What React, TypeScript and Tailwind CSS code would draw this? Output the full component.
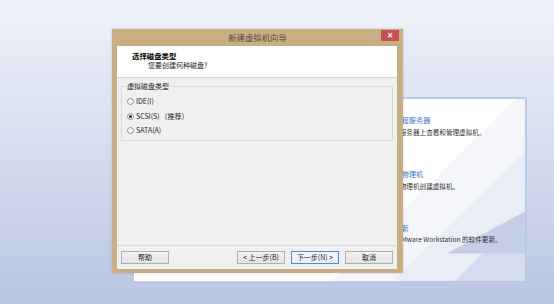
import React from "react";

const F = { fontFamily: '"Noto Sans CJK SC", "Noto Sans", sans-serif' };

function Radio({ checked, label, extra }: { checked?: boolean; label: string; extra?: string }) {
  return (
    <div className="flex items-center h-[14.7px]">
      <span className="w-[7px] h-[7px] rounded-full border border-[#8a8a8a] bg-white flex items-center justify-center shrink-0">
        {checked && <span className="w-[3px] h-[3px] rounded-full bg-[#222]" />}
      </span>
      <span className="ml-[2px] text-[7px] leading-none text-[#222]">{label}</span>
      {extra && <span className="ml-[1px] text-[7px] leading-none text-[#222]">{extra}</span>}
    </div>
  );
}

function Btn({ label, primary }: { label: string; primary?: boolean }) {
  return (
    <div
      className={
        "w-[48px] h-[13px] flex items-center justify-center text-[7px] leading-none text-[#222] border " +
        (primary
          ? "border-[#4a8fd0] bg-gradient-to-b from-[#f4f8fc] to-[#e6eef8]"
          : "border-[#b0b0b0] bg-gradient-to-b from-[#f2f2f2] to-[#e4e4e4]")
      }
    >
      {label}
    </div>
  );
}

export default function App() {
  return (
    <div
      className="relative w-[554px] h-[304px] overflow-hidden bg-gradient-to-b from-[#eff2f8] via-[#d6ddef] to-[#bbc5e2]"
      style={F}
    >
      {/* background window */}
      <div className="absolute left-[132px] top-[97px] w-[395px] h-[186px] bg-white border-2 border-[#b8cbe2] overflow-hidden">
        <svg className="absolute inset-0 w-full h-full" viewBox="0 0 395 186" preserveAspectRatio="none">
          <polygon points="200,186 395,-9 395,186" fill="#f4f6fb" />
          <polygon points="262,186 395,53 395,186" fill="#e9edf6" />
          <polygon points="324,186 395,115 395,186" fill="#d6dcef" />
          <polygon points="316,158 395,115 395,158" fill="#c6cee7" />
        </svg>
        <div className="relative flex flex-col pl-[246px] pt-[17px] gap-[33px]">
          <div className="flex flex-col gap-[3px]">
            <div className="text-[7.2px] leading-[9px] text-[#3c78c0]">连接远程服务器</div>
            <div className="text-[6.6px] leading-[9px] text-[#333]">在远程服务器上查看和管理虚拟机。</div>
          </div>
          <div className="flex flex-col gap-[3px]">
            <div className="text-[7.2px] leading-[9px] text-[#3c78c0]">虚拟化物理机</div>
            <div className="text-[6.6px] leading-[9px] text-[#333]">从一台物理机创建虚拟机。</div>
          </div>
          <div className="flex flex-col gap-[2px]">
            <div className="text-[7.2px] leading-[9px] text-[#3c78c0]">软件更新</div>
            <div className="text-[6.6px] leading-[9px] text-[#333] ml-[3px]">检查 VMware Workstation 的软件更新。</div>
          </div>
        </div>
      </div>

      {/* dialog */}
      <div className="absolute left-[112px] top-[29px] w-[291px] h-[244px] bg-[#c9ae84] flex flex-col shadow-[0_0_3px_rgba(0,0,0,0.15)]">
        <div className="relative h-[17px] flex items-center justify-center">
          <span className="text-[8.4px] leading-none text-[#574c3c]">新建虚拟机向导</span>
          <div className="absolute right-[4px] top-[1px] w-[18px] h-[11px] bg-[#c8504e] flex items-center justify-center">
            <span className="text-white text-[8px] leading-none font-bold" style={{ fontFamily: '"DejaVu Sans", sans-serif' }}>×</span>
          </div>
        </div>
        <div className="ml-[5px] mr-[6px] mb-[4px] flex-1 flex flex-col bg-[#f0f0f0]">
          {/* header */}
          <div className="h-[32px] bg-white border-b border-[#d6d6d6] flex flex-col pt-[5px]">
            <div className="pl-[15px] text-[7.4px] leading-[9px] font-bold text-black">选择磁盘类型</div>
            <div className="pl-[31px] mt-[1px] text-[7px] leading-[9px] text-[#222]">您要创建何种磁盘?</div>
          </div>
          {/* body */}
          <div className="flex-1 flex flex-col pt-[8px] px-[4px]">
            <div className="relative w-[272px] h-[55px] border border-[#dadada] flex flex-col pl-[5px] pt-[7px]">
              <span className="absolute left-[4px] top-[-5px] px-[1px] bg-[#f0f0f0] text-[7px] leading-[9px] text-[#222]">
                虚拟磁盘类型
              </span>
              <Radio label="IDE(I)" />
              <Radio checked label="SCSI(S)" extra="（推荐）" />
              <Radio label="SATA(A)" />
            </div>
          </div>
          {/* footer */}
          <div className="h-[24px] border-t border-[#d9d9d9] flex items-start pt-[5px] px-[4px]">
            <Btn label="帮助" />
            <div className="flex-1" />
            <div className="flex gap-[6px]">
              <Btn label="< 上一步(B)" />
              <Btn primary label="下一步(N) >" />
              <Btn label="取消" />
            </div>
          </div>
        </div>
      </div>
    </div>
  );
}
